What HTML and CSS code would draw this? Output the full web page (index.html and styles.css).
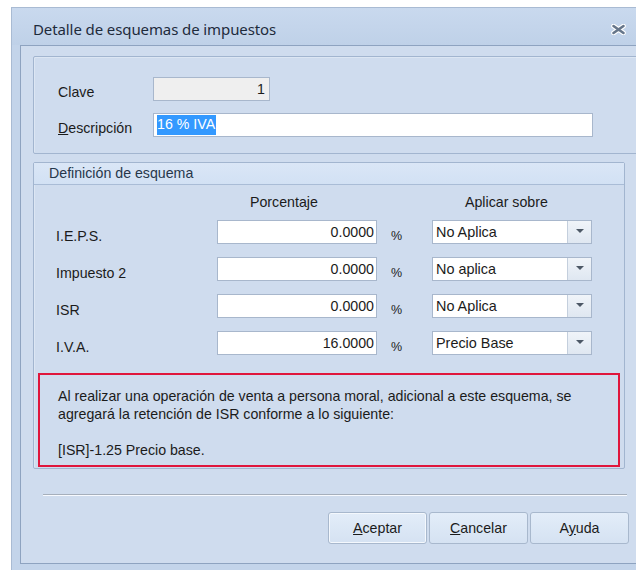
FILE: index.html
```html
<!DOCTYPE html>
<html lang="es">
<head>
<meta charset="utf-8">
<title>Detalle de esquemas de impuestos</title>
<link rel="stylesheet" href="styles.css">
</head>
<body>
<div class="window">
  <div class="titlebar">
    <span class="title">Detalle de esquemas de impuestos</span>
    <span class="close" aria-label="Cerrar">
      <svg width="15" height="11" viewBox="0 0 15 11">
        <path d="M2.5 2 L12.5 9 M12.5 2 L2.5 9" stroke="#ffffff" stroke-width="4.6" stroke-linecap="round"/>
        <path d="M2.5 2 L12.5 9 M12.5 2 L2.5 9" stroke="#66768a" stroke-width="2.6" stroke-linecap="round"/>
      </svg>
    </span>
  </div>

  <div class="client">
    <div class="group group-main">
      <div class="field-row">
        <label class="field-label">Clave</label>
        <div class="input input-key">1</div>
      </div>
      <div class="field-row">
        <label class="field-label"><u>D</u>escripción</label>
        <div class="input input-desc"><span class="selected">16 % IVA</span></div>
      </div>
    </div>

    <div class="group group-scheme">
      <div class="group-header">Definición de esquema</div>
      <div class="tax-grid">
        <div class="col-head col-head-pct">Porcentaje</div>
        <div class="col-head col-head-apply">Aplicar sobre</div>

        <div class="tax-row">
          <span class="tax-label">I.E.P.S.</span>
          <div class="input input-num">0.0000</div>
          <span class="pct">%</span>
          <div class="combo"><span class="combo-text">No Aplica</span><span class="combo-btn"><i class="arrow"></i></span></div>
        </div>
        <div class="tax-row">
          <span class="tax-label">Impuesto 2</span>
          <div class="input input-num">0.0000</div>
          <span class="pct">%</span>
          <div class="combo"><span class="combo-text">No aplica</span><span class="combo-btn"><i class="arrow"></i></span></div>
        </div>
        <div class="tax-row">
          <span class="tax-label">ISR</span>
          <div class="input input-num">0.0000</div>
          <span class="pct">%</span>
          <div class="combo"><span class="combo-text">No Aplica</span><span class="combo-btn"><i class="arrow"></i></span></div>
        </div>
        <div class="tax-row">
          <span class="tax-label">I.V.A.</span>
          <div class="input input-num">16.0000</div>
          <span class="pct">%</span>
          <div class="combo"><span class="combo-text">Precio Base</span><span class="combo-btn"><i class="arrow"></i></span></div>
        </div>
      </div>

      <div class="notice">
        <p>Al realizar una operación de venta a persona moral, adicional a este esquema, se<br>agregará la retención de ISR conforme a lo siguiente:</p>
        <p class="notice-rule">[ISR]-1.25 Precio base.</p>
      </div>
    </div>

    <div class="separator"></div>

    <div class="buttons">
      <button class="btn btn-default"><u>A</u>ceptar</button>
      <button class="btn"><u>C</u>ancelar</button>
      <button class="btn">A<u>y</u>uda</button>
    </div>
  </div>
</div>
</body>
</html>
```

FILE: styles.css
```css
html, body {
  margin: 0;
  padding: 0;
  background: #ffffff;
  overflow: hidden;
  width: 636px;
  height: 570px;
}

body {
  font-family: "Liberation Sans", Arial, sans-serif;
  font-size: 14.2px;
  color: #1b1b1b;
}

/* dialog frame */
.window {
  margin: 7px 0 0 11px;
  width: 640px;
  height: 580px;
  background: #c3d4ea;
  border-left: 1px solid #a9bbd3;
  border-top: 1px solid #a9bbd3;
  box-sizing: border-box;
}

.titlebar {
  height: 37px;
  display: flex;
  align-items: center;
  justify-content: space-between;
  padding: 0 25px 0 21px;
  background: linear-gradient(#c9d9ee, #bfd1e8);
}

.title {
  font-family: "Noto Sans", "Open Sans", sans-serif;
  font-size: 15px;
  color: #1e2b3c;
  letter-spacing: -0.1px;
  margin-top: 5px;
}

.close {
  display: flex;
  margin-top: 6px;
}

/* client area */
.client {
  margin-left: 8px;
  width: 625px;
  height: 517px;
  background: #cfdcee;
  border: 1px solid #8ea3c0;
}

.group {
  margin-left: 12px;
  width: 590px;
  border: 1px solid #a2b5cf;
  border-radius: 2px;
  box-shadow: inset 1px 1px 0 #dce6f3;
}

.group-main {
  margin-top: 10px;
  padding: 20px 0 16px 24px;
  display: flex;
  flex-direction: column;
  gap: 12px;
}

.field-row {
  display: flex;
  align-items: center;
}

.field-label {
  width: 95px;
  padding-top: 5px;
}

.input {
  height: 24px;
  box-sizing: border-box;
  border: 1px solid #a8b7cc;
  background: #ffffff;
  display: flex;
  align-items: center;
  padding: 0 3px;
  font-size: 14.2px;
}

.input-key {
  width: 117px;
  background: #efefef;
  justify-content: flex-end;
  padding-right: 4px;
}

.input-desc {
  width: 440px;
}

.selected {
  background: #3399ff;
  color: #ffffff;
  padding: 1px 1px 2px 0;
  line-height: 17px;
}

.group-scheme {
  margin-top: 8px;
  padding-bottom: 1px;
}

.group-header {
  height: 21px;
  line-height: 20px;
  padding-left: 15px;
  background: linear-gradient(#dae6f6, #d2e1f4);
  border-bottom: 1px solid #a9bcd6;
  color: #27374b;
}

.tax-grid {
  display: grid;
  grid-template-columns: 161px 160px 55px 160px;
  padding-left: 22px;
  row-gap: 13px;
  padding-top: 9px;
}

.col-head {
  line-height: 16px;
  margin-bottom: -3px;
  padding-left: 33px;
}

.col-head-pct { grid-column: 2; }
.col-head-apply { grid-column: 4; }

.tax-row {
  display: contents;
}

.tax-label {
  grid-column: 1;
  align-self: center;
  padding-top: 7px;
}

.input-num {
  grid-column: 2;
  justify-content: flex-end;
  padding-right: 2px;
}

.pct {
  grid-column: 3;
  align-self: center;
  padding: 8px 0 0 14px;
  font-size: 12.5px;
}

.combo {
  grid-column: 4;
  height: 24px;
  box-sizing: border-box;
  border: 1px solid #a8b7cc;
  background: #ffffff;
  display: flex;
  font-size: 14.4px;
}

.combo-text {
  flex: 1;
  display: flex;
  align-items: center;
  padding-left: 3px;
}

.combo-btn {
  width: 23px;
  border-left: 1px solid #c4cfdd;
  background: linear-gradient(#f0f4f9, #dfe7f1);
  display: flex;
  align-items: center;
  justify-content: center;
}

.arrow {
  width: 0;
  height: 0;
  border-left: 4px solid transparent;
  border-right: 4px solid transparent;
  border-top: 4px solid #4d5866;
  margin-top: -2px;
}

.notice {
  margin: 18px 4px 0 4px;
  border: 2px solid #e0163c;
  padding: 12px 0 6px 18px;
  line-height: 18px;
}

.notice p {
  margin: 0;
}

.notice-rule {
  margin-top: 18px !important;
}

.separator {
  margin: 25px 0 0 22px;
  width: 584px;
  height: 1px;
  background: #a6afbb;
  border-bottom: 1px solid #f7faff;
}

.buttons {
  margin: 16px 0 0 307px;
  display: flex;
  gap: 2px;
}

.btn {
  width: 99px;
  height: 32px;
  border: 1px solid #a8b8cd;
  border-radius: 3px;
  background: linear-gradient(#e3edf9, #d5e2f2);
  font-family: "Liberation Sans", Arial, sans-serif;
  font-size: 14.2px;
  color: #1b1b1b;
  padding: 0;
}

.btn-default {
  box-shadow: inset 0 0 0 1px #f4f8fd;
}
```
